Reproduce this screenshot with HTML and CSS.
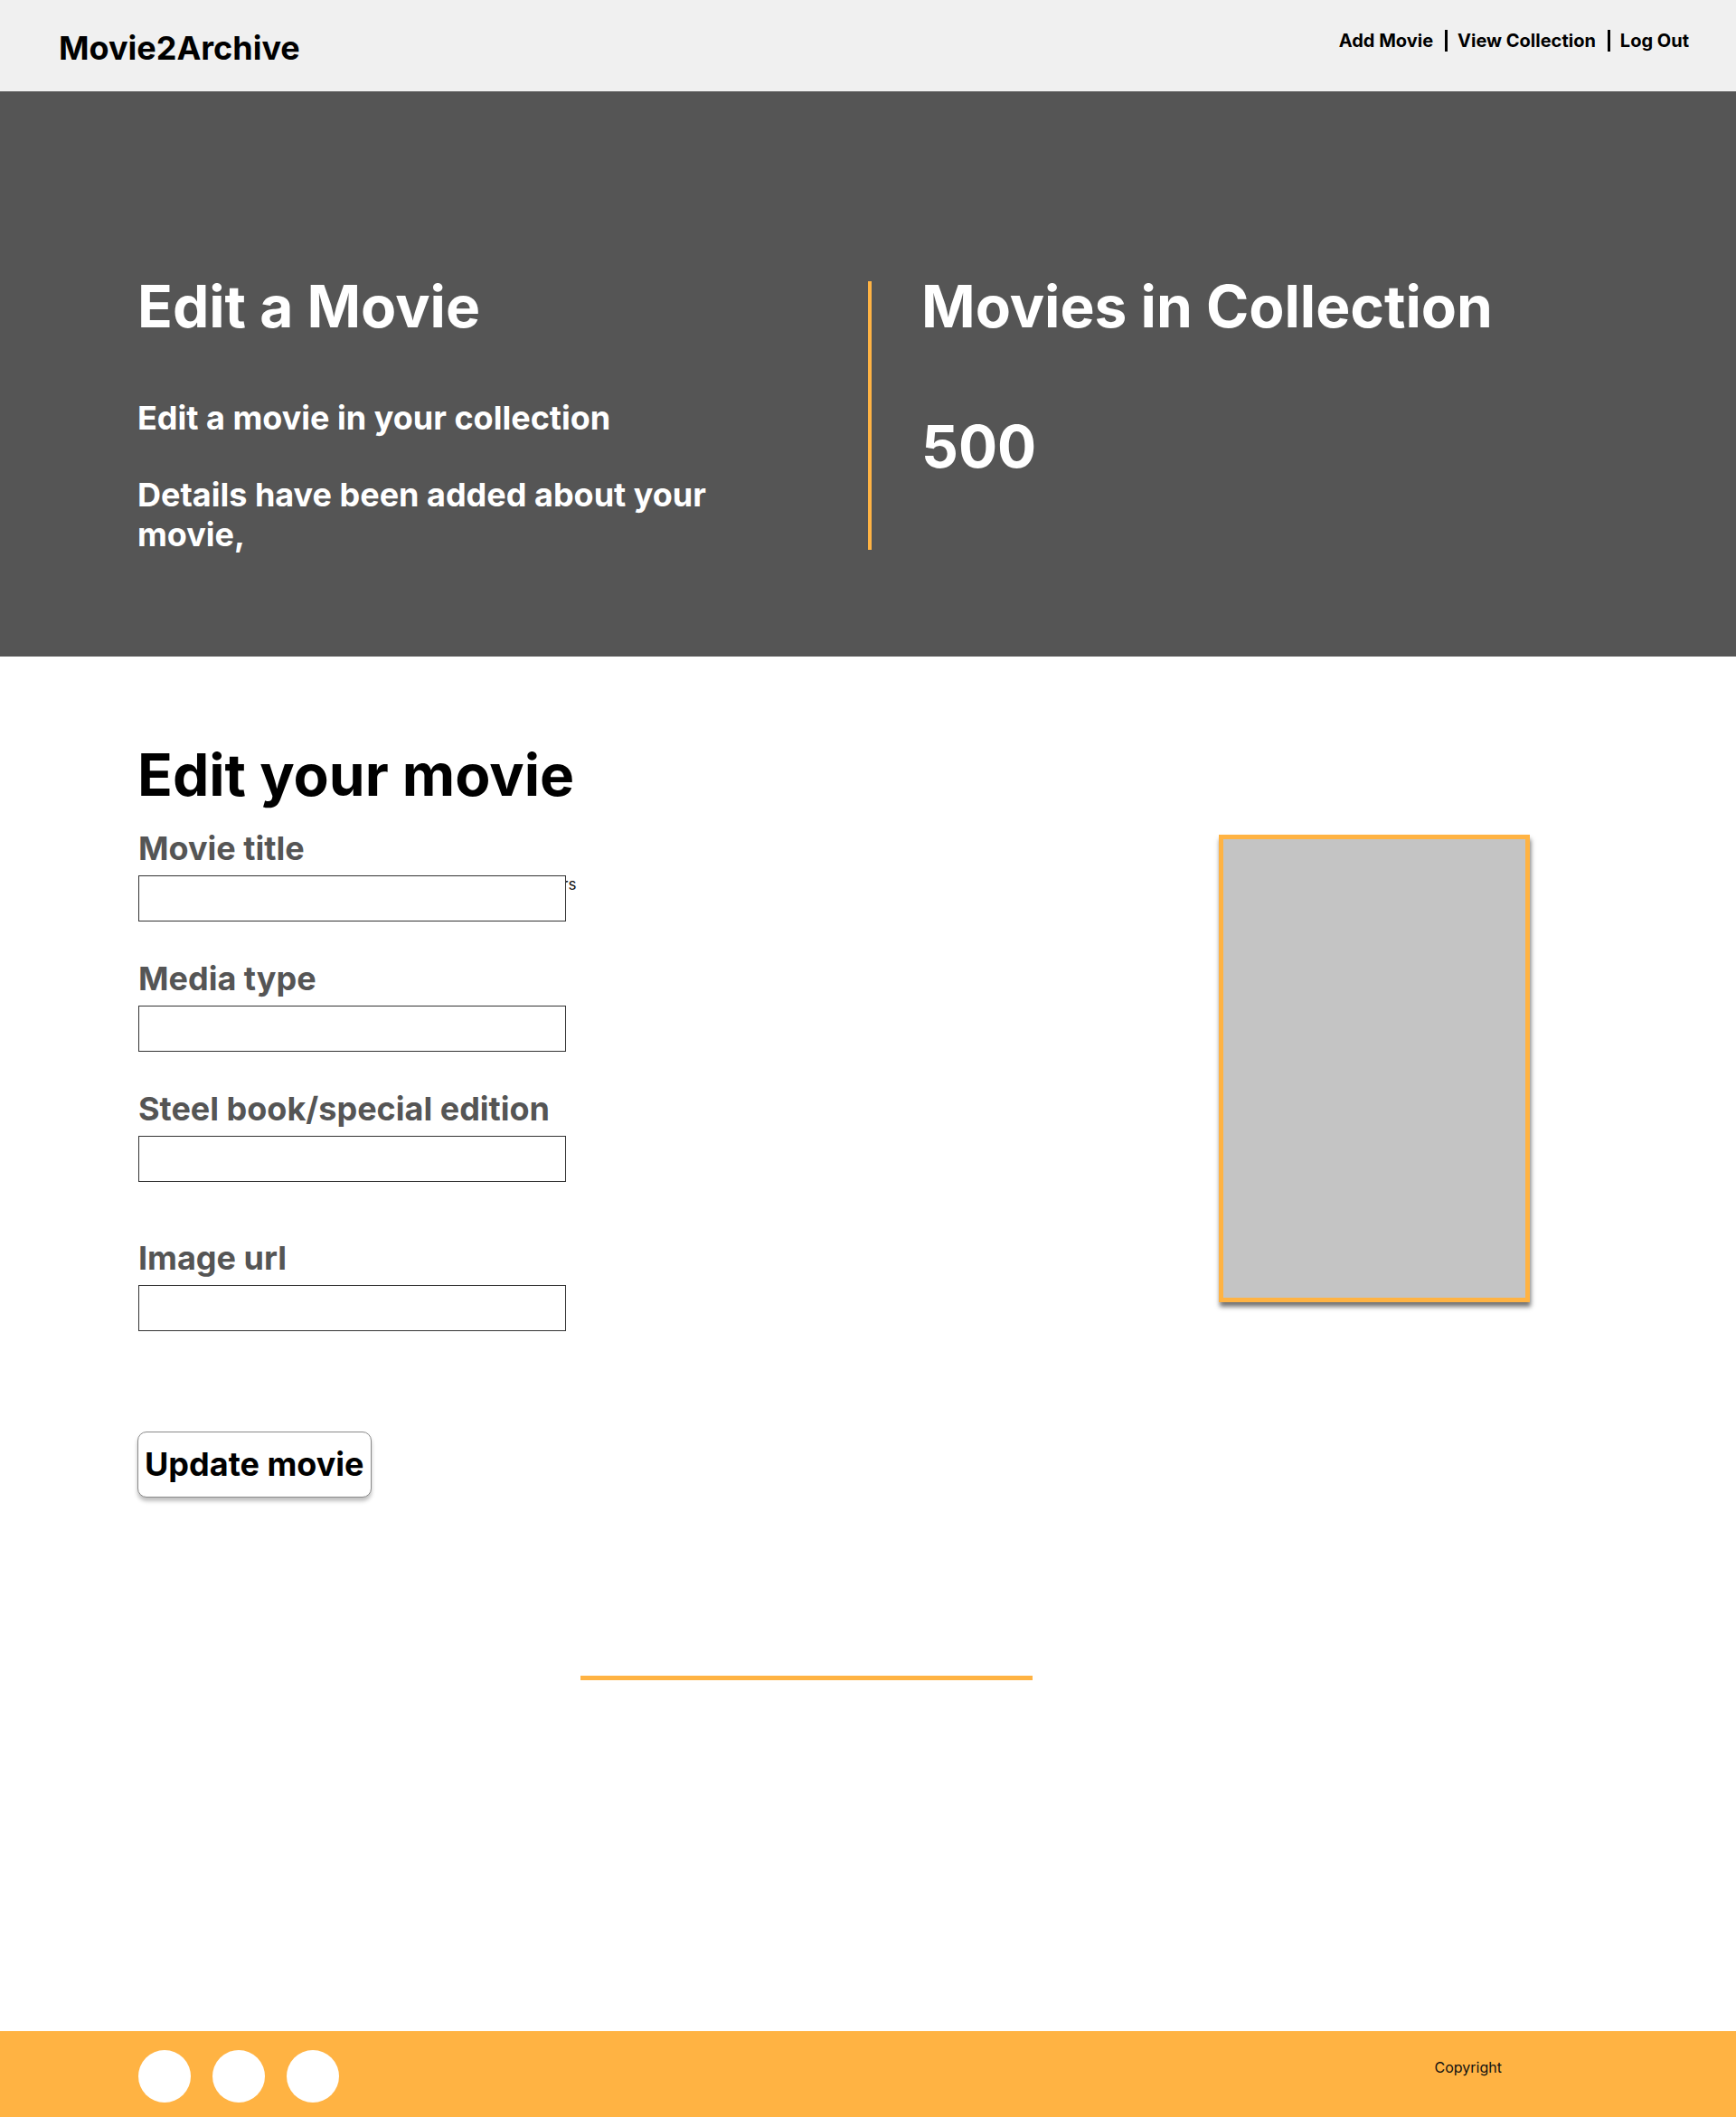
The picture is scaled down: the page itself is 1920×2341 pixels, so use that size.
FILE: index.html
```html
<!DOCTYPE html>
<html lang="en">
<head>
<meta charset="utf-8">
<title>Movie2Archive - Edit a Movie</title>
<link rel="stylesheet" href="styles.css">
</head>
<body>
<header class="site-header">
  <div class="logo">Movie2Archive</div>
  <nav class="nav">
    <a class="nav-link" href="#">Add Movie</a>
    <span class="sep"></span>
    <a class="nav-link" href="#">View Collection</a>
    <span class="sep"></span>
    <a class="nav-link" href="#">Log Out</a>
  </nav>
</header>

<section class="hero">
  <div class="hero-col">
    <h1 class="hero-title">Edit a Movie</h1>
    <p class="hero-sub hero-sub-first">Edit a movie in your collection</p>
    <p class="hero-sub hero-sub-second">Details have been added about your movie,</p>
  </div>
  <div class="hero-col hero-right">
    <h1 class="hero-title">Movies in Collection</h1>
    <div class="hero-count">500</div>
  </div>
</section>

<main class="main">
  <h2 class="page-title">Edit your movie</h2>
  <div class="edit-row">
    <form class="form">
      <label class="label">Movie title</label>
      <div class="field-row"><input class="input" type="text"><span class="stray">rs</span></div>

      <label class="label label-gap">Media type</label>
      <div class="field-row"><input class="input" type="text"></div>

      <label class="label label-gap">Steel book/special edition</label>
      <div class="field-row"><input class="input" type="text"></div>

      <label class="label label-gap-lg">Image url</label>
      <div class="field-row"><input class="input" type="text"></div>

      <button class="btn" type="button">Update movie</button>
    </form>
    <div class="poster"></div>
  </div>
  <div class="divider"></div>
</main>

<footer class="footer">
  <div class="socials">
    <span class="circle"></span>
    <span class="circle"></span>
    <span class="circle"></span>
  </div>
  <div class="copyright">Copyright</div>
</footer>
</body>
</html>
```

FILE: styles.css
```css
* { box-sizing: border-box; }

html, body {
  margin: 0;
  padding: 0;
}

body {
  font-family: "Inter", "Liberation Sans", sans-serif;
  color: #000;
  background: #fff;
  min-height: 100vh;
  display: flex;
  flex-direction: column;
}

/* Header */
.site-header {
  height: 101px;
  background: #f0f0f0;
  display: flex;
  justify-content: space-between;
  align-items: flex-start;
  padding: 31px 52px 0 65px;
}

.logo {
  font-size: 36px;
  line-height: 44px;
  font-weight: 700;
}

.nav {
  display: flex;
  align-items: flex-start;
  margin-top: 2px;
}

.nav-link {
  font-size: 20px;
  line-height: 24px;
  font-weight: 700;
  color: #000;
  text-decoration: none;
}

.sep {
  width: 3px;
  height: 24px;
  background: #000;
  margin: 0 11px 0 13px;
}

/* Hero */
.hero {
  background: #555555;
  color: #fff;
  display: grid;
  grid-template-columns: 1fr 1fr;
  padding: 210px 152px 113px 152px;
}

.hero-title {
  margin: 0;
  font-size: 64px;
  line-height: 56px;
  font-weight: 700;
  white-space: nowrap;
}

.hero-sub {
  margin: 0;
  font-size: 36px;
  line-height: 44px;
  font-weight: 700;
  max-width: 680px;
}

.hero-sub-first { margin-top: 73px; }
.hero-sub-second { margin-top: 41px; }

.hero-right {
  border-left: 4px solid #ffb343;
  padding-left: 55px;
  margin-bottom: 5px;
}

.hero-count {
  margin-top: 99px;
  font-size: 64px;
  line-height: 56px;
  font-weight: 700;
}

/* Main */
.main {
  flex: 1;
  padding: 92px 152px 0 152px;
}

.page-title {
  margin: 0;
  font-size: 64px;
  line-height: 78px;
  font-weight: 700;
}

.edit-row {
  margin-top: 23px;
  display: flex;
  justify-content: space-between;
  align-items: flex-start;
}

.form {
  display: flex;
  flex-direction: column;
  align-items: flex-start;
}

.label {
  font-size: 36px;
  line-height: 39px;
  font-weight: 700;
  color: #555555;
  margin-left: 1px;
}

.label-gap { margin-top: 44px; }
.label-gap-lg { margin-top: 65px; }

.field-row {
  margin-top: 10px;
  display: flex;
  align-items: flex-start;
}

.input {
  position: relative;
  z-index: 1;
  width: 473px;
  height: 51px;
  margin: 0 0 0 1px;
  border: 1px solid #333;
  background: #fff;
  font-family: inherit;
  font-size: 18px;
  padding: 0 8px;
}

.stray {
  font-size: 17px;
  line-height: 20px;
  margin-left: -4px;
  color: #111;
}

.btn {
  margin-top: 111px;
  height: 73px;
  padding: 0 7px;
  background: #fff;
  border: 1px solid #8a8a8a;
  border-radius: 10px;
  box-shadow: 0 4px 4px rgba(0, 0, 0, 0.25);
  font-family: inherit;
  font-size: 36px;
  line-height: 71px;
  font-weight: 700;
  color: #000;
}

.poster {
  margin-top: 4px;
  margin-right: 76px;
  width: 344px;
  height: 517px;
  background: #c4c4c4;
  border: 5px solid #ffb343;
  box-shadow: 1px 5px 5px rgba(0, 0, 0, 0.55);
}

.divider {
  margin-top: 197px;
  margin-left: 490px;
  width: 500px;
  height: 5px;
  background: #ffb343;
}

/* Footer */
.footer {
  height: 95px;
  background: #ffb343;
  display: flex;
  justify-content: space-between;
  align-items: flex-start;
  padding: 21px 259px 0 153px;
}

.socials {
  display: flex;
  gap: 24px;
}

.circle {
  width: 58px;
  height: 58px;
  border-radius: 50%;
  background: #fff;
}

.copyright {
  margin-top: 9px;
  font-size: 16px;
  line-height: 20px;
  color: #111;
}
```
